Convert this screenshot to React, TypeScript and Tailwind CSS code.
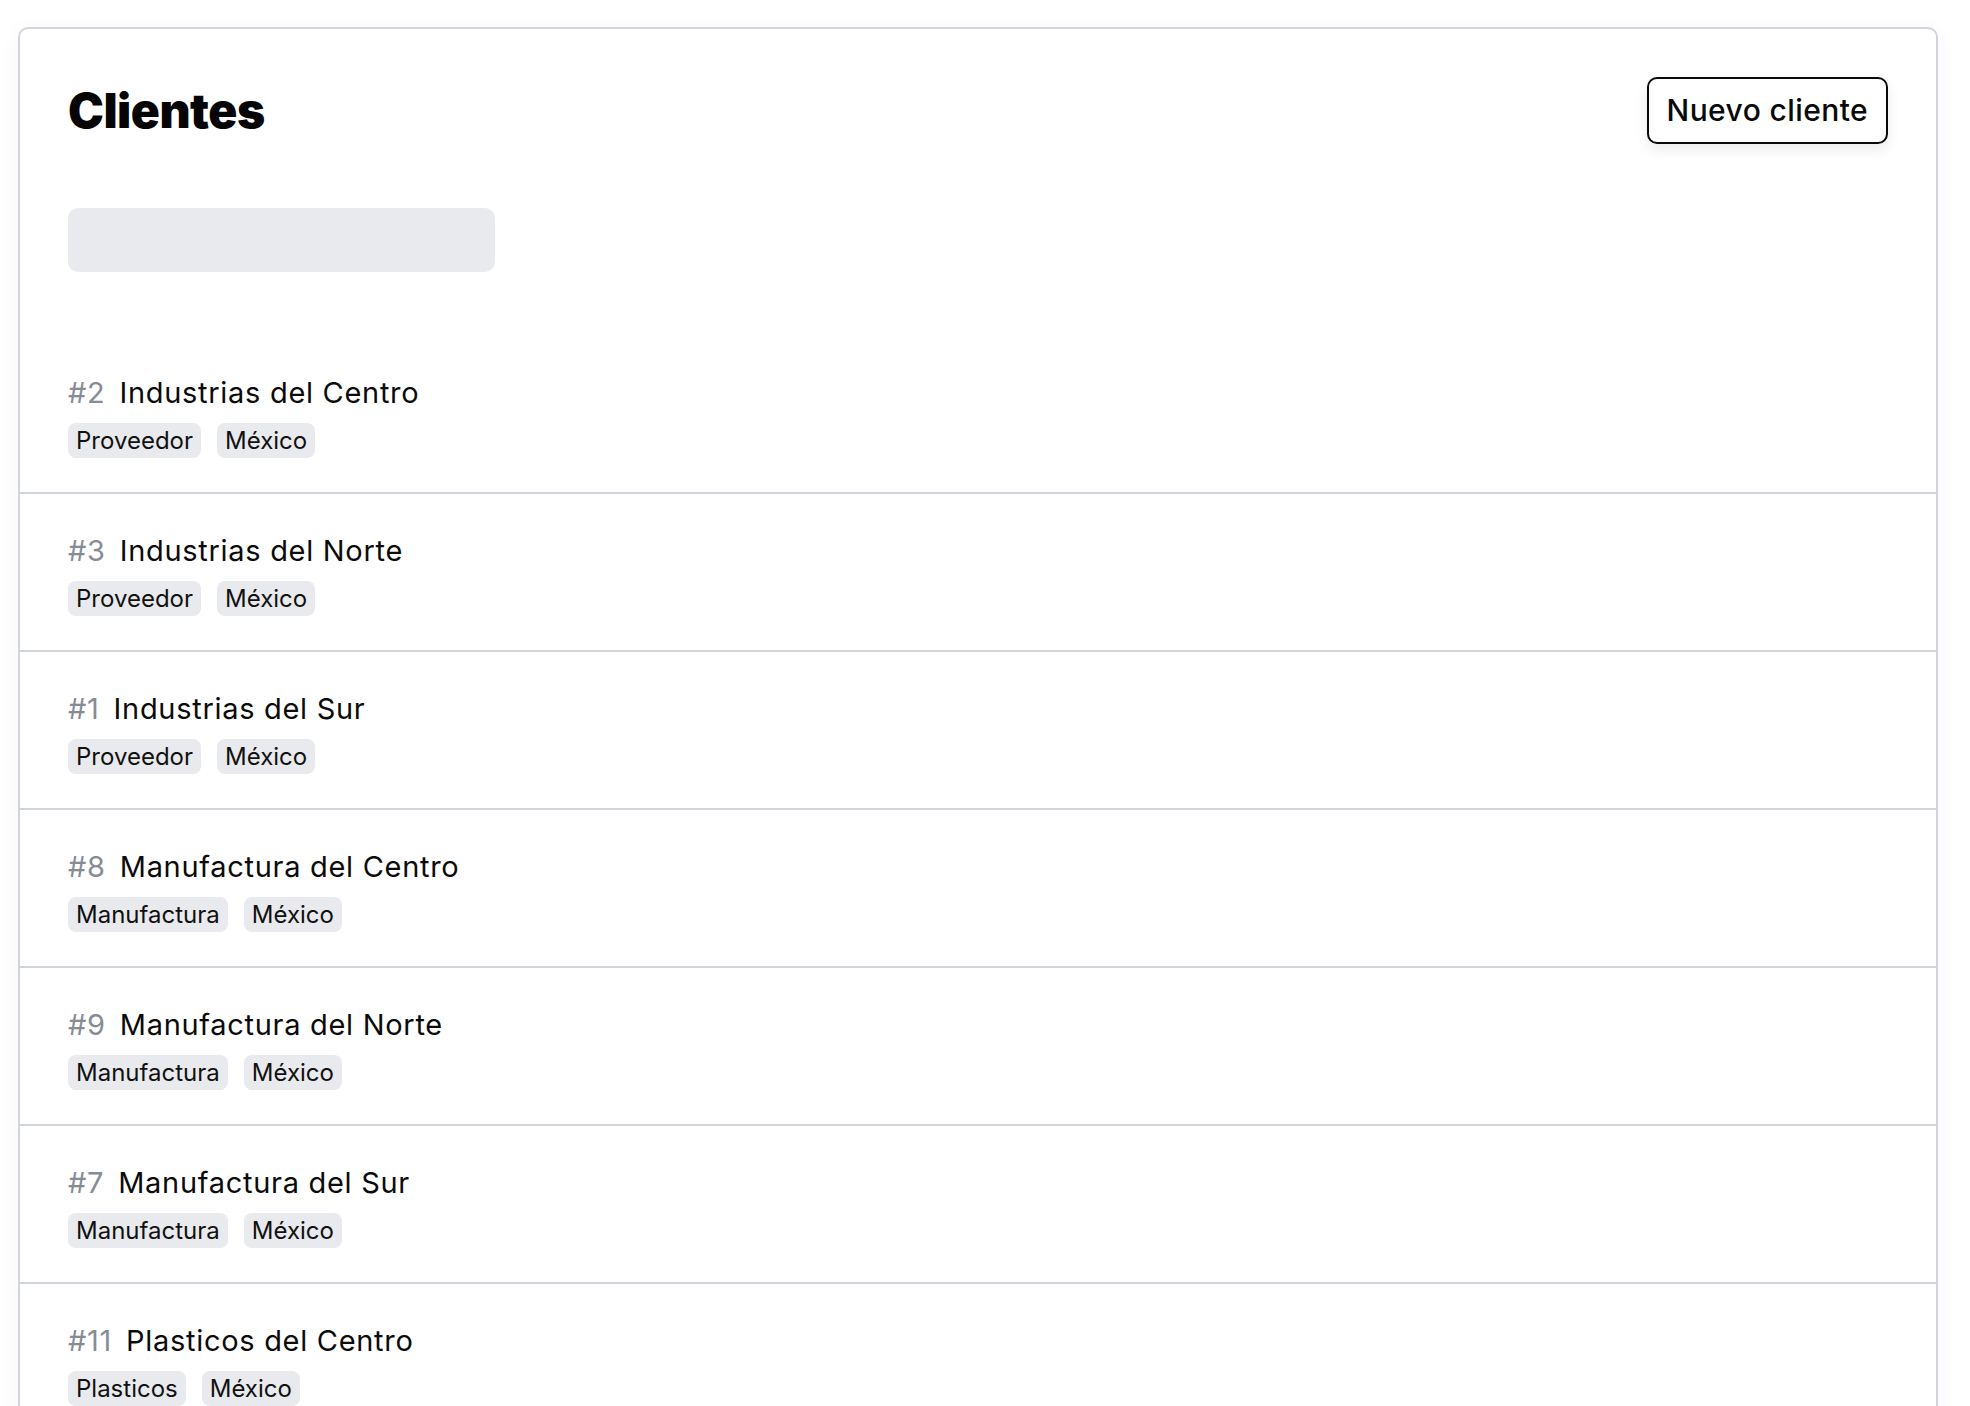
import React from 'react';

type Cliente = {
  id: number;
  nombre: string;
  tipo: string;
  pais: string;
};

const CLIENTES: Cliente[] = [
  { id: 2, nombre: 'Industrias del Centro', tipo: 'Proveedor', pais: 'México' },
  { id: 3, nombre: 'Industrias del Norte', tipo: 'Proveedor', pais: 'México' },
  { id: 1, nombre: 'Industrias del Sur', tipo: 'Proveedor', pais: 'México' },
  { id: 8, nombre: 'Manufactura del Centro', tipo: 'Manufactura', pais: 'México' },
  { id: 9, nombre: 'Manufactura del Norte', tipo: 'Manufactura', pais: 'México' },
  { id: 7, nombre: 'Manufactura del Sur', tipo: 'Manufactura', pais: 'México' },
  { id: 11, nombre: 'Plasticos del Centro', tipo: 'Plasticos', pais: 'México' },
  { id: 12, nombre: 'Plasticos del Norte', tipo: 'Plasticos', pais: 'México' },
  { id: 10, nombre: 'Plasticos del Sur', tipo: 'Plasticos', pais: 'México' },
];

function Tag({ children }: { children: React.ReactNode }) {
  return (
    <span className="inline-flex items-center h-[35px] px-[8px] rounded-[8px] bg-[#e9eaed] text-[24px] leading-none text-[#111]">
      {children}
    </span>
  );
}

function ClienteRow({ cliente }: { cliente: Cliente }) {
  return (
    <div className="px-[48px] pt-[36px] pb-[34px] border-b-2 border-[#d1d5db]">
      <div className="flex items-baseline gap-[14px] h-[42px] leading-[42px] text-[29px] tracking-[0.7px]">
        <span className="text-[#868c95]">#{cliente.id}</span>
        <span className="text-[#0b0b0b]">{cliente.nombre}</span>
      </div>
      <div className="flex gap-[16px] mt-[9px]">
        <Tag>{cliente.tipo}</Tag>
        <Tag>{cliente.pais}</Tag>
      </div>
    </div>
  );
}

export default function App() {
  return (
    <div className="min-h-screen bg-white font-['Inter',sans-serif] pt-[27px] pl-[18px]">
      <div className="w-[1920px] bg-white border-2 border-[#d1d5db] rounded-[10px] shadow-[0_4px_24px_rgba(0,0,0,0.04)] overflow-hidden">
        <div className="px-[48px] pt-[48px]">
          <div className="flex items-center justify-between">
            <h1 className="text-[48px] leading-[48px] font-black tracking-[-0.5px] text-[#050505]">Clientes</h1>
            <button className="h-[67px] px-[18px] border-2 border-[#0a0a0a] rounded-[10px] bg-white text-[30px] tracking-[0.4px] font-medium text-[#0a0a0a] shadow-[0_6px_14px_rgba(0,0,0,0.08)]">
              Nuevo cliente
            </button>
          </div>
          <div className="mt-[64px] w-[427px] h-[64px] rounded-[10px] bg-[#e9eaed]" />
        </div>
        <div className="mt-[64px]">
          {CLIENTES.map(c => (
            <ClienteRow key={c.id} cliente={c} />
          ))}
        </div>
      </div>
    </div>
  );
}
